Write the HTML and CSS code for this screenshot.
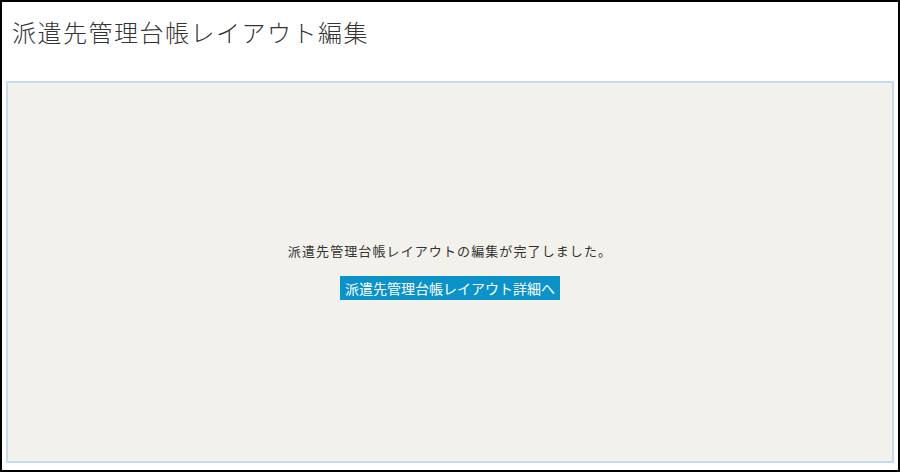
FILE: index.html
```html
<!DOCTYPE html>
<html lang="ja">
<head>
<meta charset="utf-8">
<link rel="stylesheet" href="styles.css">
</head>
<body>
<div class="frame">
  <header class="head">
    <h1 class="title">派遣先管理台帳レイアウト編集</h1>
  </header>
  <main class="panel">
    <div class="done">
      <p class="msg">派遣先管理台帳レイアウトの編集が完了しました。</p>
      <a class="btn" href="#">派遣先管理台帳レイアウト詳細へ</a>
    </div>
  </main>
</div>
</body>
</html>
```
FILE: styles.css
```css
html, body {
  margin: 0;
  padding: 0;
  background: #fff;
}
body {
  font-family: "Noto Sans CJK JP", "Noto Sans", sans-serif;
}
.frame {
  box-sizing: border-box;
  width: 900px;
  height: 472px;
  border: 2px solid #000;
  display: flex;
  flex-direction: column;
  background: #fff;
}
.head {
  height: 79px;
  flex: none;
  padding: 16px 0 0 10px;
  box-sizing: border-box;
}
.title {
  margin: 0;
  font-size: 24px;
  line-height: 28px;
  font-weight: 300;
  color: #333;
  letter-spacing: 1.5px;
}
.panel {
  flex: 1;
  margin: 0 4px 7px 4px;
  border: 2px solid #c2dcf3;
  background: #f2f1eb;
  display: flex;
  align-items: center;
  justify-content: center;
}
.done {
  display: flex;
  flex-direction: column;
  align-items: center;
  gap: 16px;
  margin-top: -3px;
}
.msg {
  margin: 0;
  font-size: 13px;
  line-height: 18px;
  color: #333;
  letter-spacing: 1.1px;
}
.btn {
  display: block;
  background: #0b93c9;
  color: #fff;
  text-decoration: none;
  font-size: 14px;
  line-height: 24px;
  padding: 0 5px;
}
```
